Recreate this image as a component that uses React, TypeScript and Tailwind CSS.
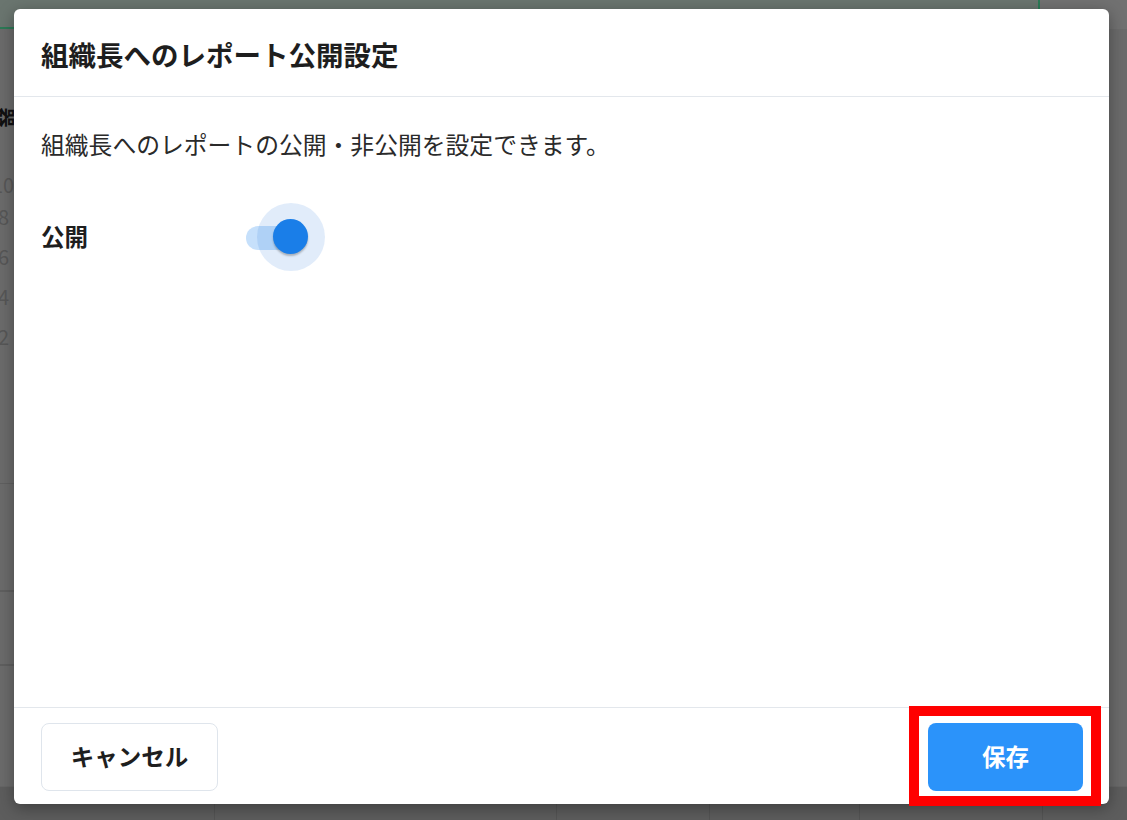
import React from 'react';

const font = { fontFamily: '"Noto Sans CJK JP", "Noto Sans", sans-serif' };

// Dimmed page that sits behind the dialog
const Backdrop = () => (
  <div className="flex h-full flex-col bg-[#6b6b6b]">
    <div className="flex h-[29px] shrink-0">
      <div className="w-[1040px] border-b-2 border-r-2 border-[#2c7a56] bg-[#6a756f]" />
      <div className="flex-1 bg-[#717171]" />
    </div>
    <div className="flex flex-1">
      <div className="relative w-[14px] overflow-hidden text-[#3f3f3f]">
        <div className="mt-[78px] -ml-[5px] rotate-90 text-[20px] font-bold leading-none text-[#111]">器</div>
        <div className="mt-[42px] -ml-[8px] text-[20px] leading-[32px] text-[#575757]">
          <div>10</div>
          <div className="ml-[6px]">8</div>
          <div className="ml-[6px] mt-[8px]">6</div>
          <div className="ml-[6px] mt-[8px]">4</div>
          <div className="ml-[6px] mt-[8px]">2</div>
        </div>
        <div className="mt-[130px] border-t border-[#606060]" />
        <div className="mt-[106px] border-t-2 border-[#5f5f5f]" />
        <div className="mt-[72px] border-t-2 border-[#5f5f5f]" />
      </div>
      <div className="flex-1" />
    </div>
    <div className="flex h-[34px] shrink-0 border-t border-[#666] bg-[#5d5d5d]">
      <div className="w-[215px] border-r border-[#545454]" />
      <div className="w-[342px] border-r border-[#545454]" />
      <div className="w-[153px] border-r border-[#545454]" />
      <div className="w-[150px] border-r border-[#545454]" />
      <div className="w-[183px] border-r border-[#545454]" />
      <div className="flex-1" />
    </div>
  </div>
);

const Switch = ({ checked }: { checked: boolean }) => (
  <div className="relative h-[68px] w-[80px]">
    <div className="absolute left-0 top-[23px] h-[24px] w-[58px] rounded-full bg-[#1a84f0]/25" />
    {checked && <div className="absolute left-[11px] top-0 h-[68px] w-[68px] rounded-full bg-[#1a6fd6]/[0.13]" />}
    <div className="absolute left-[27px] top-[16px] h-[35px] w-[35px] rounded-full bg-[#1a7ee8] shadow-[0_2px_2px_rgba(0,0,0,0.25)]" />
  </div>
);

const App = () => {
  return (
    <div className="relative h-[820px] w-full overflow-hidden" style={font}>
      <Backdrop />

      {/* Dialog */}
      <div className="absolute inset-0 flex pb-[16px] pl-[14px] pr-[18px] pt-[9px]">
        <div className="flex flex-1 flex-col rounded-[6px] bg-white shadow-[0_4px_16px_rgba(0,0,0,0.35)]">
          <div className="flex h-[88px] shrink-0 items-center border-b border-[#e3e7ec] px-[27px] pt-[5px]">
            <h2 className="text-[27.5px] font-bold leading-none text-[#1e1e1e]">組織長へのレポート公開設定</h2>
          </div>

          <div className="flex-1 px-[27px] pt-[30px]">
            <p className="text-[23.8px] leading-[34px] text-[#2a2a2a]">組織長へのレポートの公開・非公開を設定できます。</p>
            <div className="mt-[42px] flex items-center">
              <span className="w-[205px] text-[23.5px] font-bold text-[#1e1e1e]">公開</span>
              <Switch checked />
            </div>
          </div>

          <div className="flex h-[97px] shrink-0 items-center justify-between border-t border-[#e3e7ec] pl-[27px] pr-[26px] pt-[1px]">
            <button className="h-[68px] w-[177px] rounded-[8px] border-[1.5px] border-[#dfe5ec] bg-white text-[23.5px] font-bold text-[#1e1e1e]">
              キャンセル
            </button>
            <div className="relative">
              <button className="h-[68px] w-[155px] rounded-[8px] bg-[#2b93fa] text-[23.5px] font-bold text-white">
                保存
              </button>
              {/* highlight annotation */}
              <span className="pointer-events-none absolute -bottom-[15px] -left-[19px] -right-[18px] -top-[17px] border-[10px] border-[#ff0000]" />
            </div>
          </div>
        </div>
      </div>
    </div>
  );
};

export default App;
